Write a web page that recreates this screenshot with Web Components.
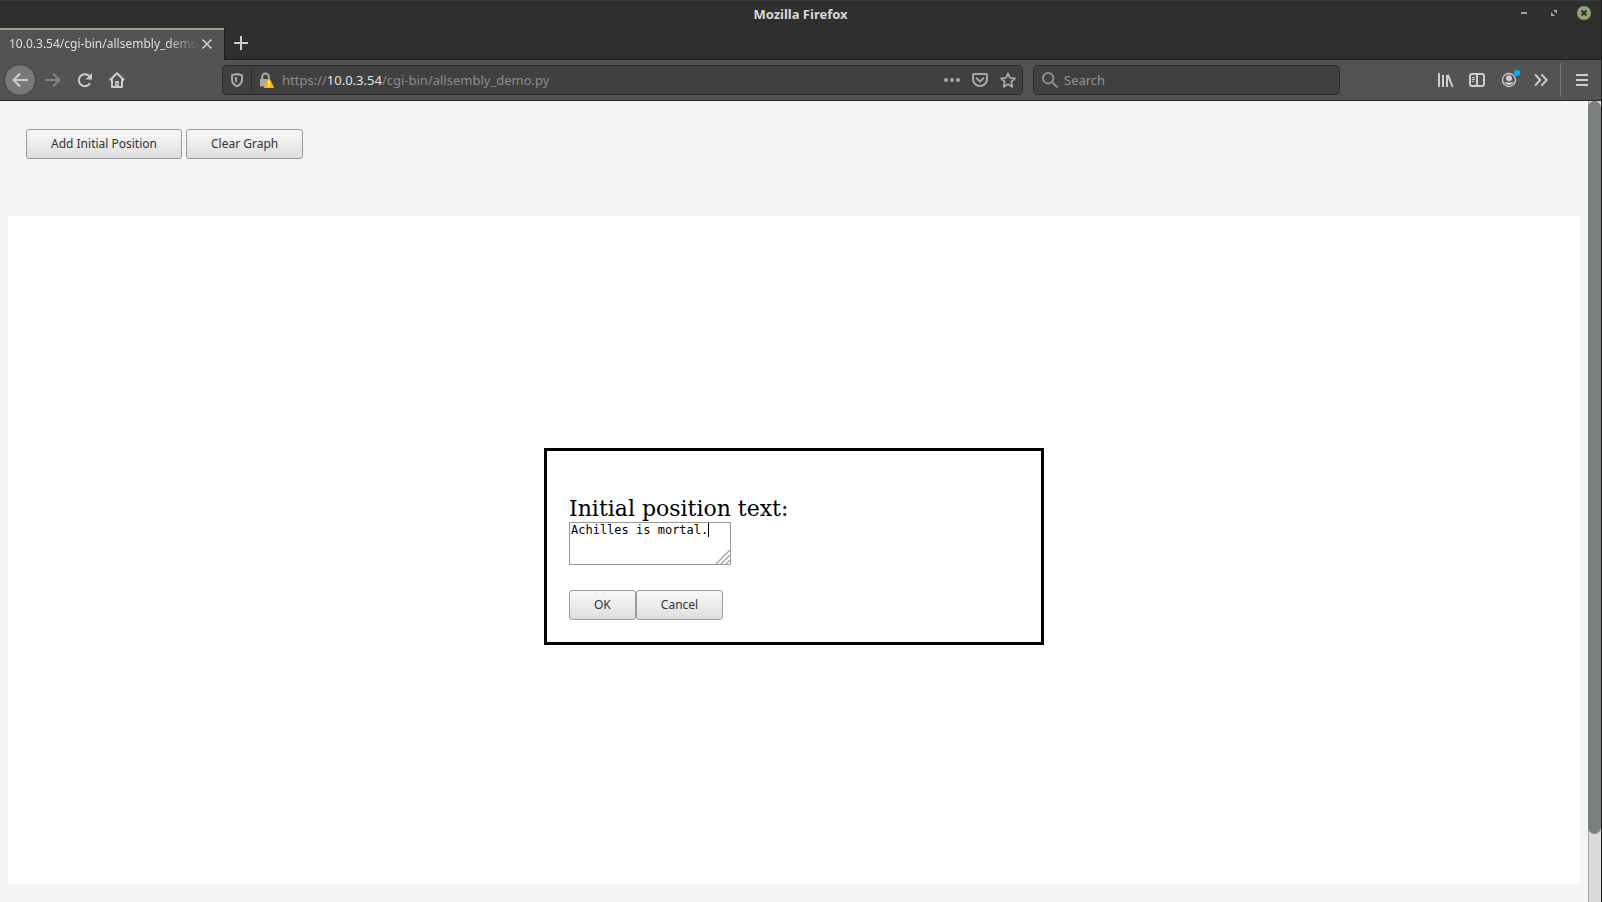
<!DOCTYPE html>
<html lang="en">
<head>
<meta charset="utf-8">
<title>Mozilla Firefox</title>
<style>
  html, body { height: 100%; }
  body { margin: 0; background: #f5f5f5; font-family: "Noto Sans", sans-serif; }
</style>
</head>
<body>
<browser-window>
  <title-bar slot="chrome">Mozilla Firefox</title-bar>
  <tab-strip slot="chrome">10.0.3.54/cgi-bin/allsembly_demo.py</tab-strip>
  <nav-bar slot="chrome"></nav-bar>
  <graph-page>
    <push-button slot="tools">Add Initial Position</push-button>
    <push-button slot="tools">Clear Graph</push-button>
    <position-dialog></position-dialog>
  </graph-page>
</browser-window>

<script>
  const define = (name, html) => {
    const template = document.createElement('template');
    template.innerHTML = html;
    customElements.define(name, class extends HTMLElement {
      constructor() {
        super();
        this.attachShadow({ mode: 'open' }).append(template.content.cloneNode(true));
      }
    });
  };

  define('browser-window', `
    <style>
      :host { display: flex; flex-direction: column; height: 100vh; box-sizing: border-box; border-right: 1px solid #1c1c1c; }
      main { flex: 1; display: flex; min-height: 0; }
      main ::slotted(*) { flex: 1; }
      .track { flex: 0 0 13px; box-sizing: border-box; background: #dadada; box-shadow: inset 1px 0 #a5a8a8; }
      .thumb { height: 733px; max-height: 92%; border-radius: 7px; background: #7b7f7f; }
    </style>
    <header><slot name="chrome"></slot></header>
    <main><slot></slot><div class="track"><div class="thumb"></div></div></main>`);

  define('title-bar', `
    <style>
      :host { display: grid; grid-template-columns: 1fr auto 1fr; align-items: start; height: 28px; box-sizing: border-box;
        border-top: 1px solid #3b3b3b; background: #2f2f2f; color: #d8d8d8; font-size: 13px; font-weight: 700; line-height: 26px; }
      .controls { grid-column: 3; display: flex; justify-content: flex-end; gap: 14px; padding-right: 9px; height: 24px; }
      .title { grid-column: 2; }
      button { border: 0; padding: 0; background: none; width: 16px; height: 24px; display: grid; place-items: center; }
      svg { display: block; }
    </style>
    <span class="title"><slot></slot></span>
    <div class="controls">
      <button aria-label="Minimize"><svg width="16" height="16"><path d="M5 8h6" stroke="#a3a3a3" stroke-width="2"/></svg></button>
      <button aria-label="Restore"><svg width="16" height="16" fill="#a3a3a3"><path d="M7 5h4v4zM5 7v4h4z"/></svg></button>
      <button aria-label="Close"><svg width="16" height="16"><circle cx="8" cy="8" r="7" fill="#8fa876"/><path d="M5.5 5.5l5 5m0-5l-5 5" stroke="#2f2f2f" stroke-width="2"/></svg></button>
    </div>`);

  define('tab-strip', `
    <style>
      :host { display: flex; gap: 1px; height: 32px; background: #2f2f2f; box-shadow: inset 0 -1px #1c1c1c; }
      .tab { display: flex; align-items: center; width: 224px; box-sizing: border-box; border-top: 2px solid #8fa876;
        background: #535353; padding: 0 9px; box-shadow: 1px 0 #1c1c1c; }
      .label { flex: 1; border: 0; padding: 0 0 2px; background: none; color: #dedede; text-align: left; font: 12px/18px "Noto Sans", sans-serif;
        white-space: nowrap; overflow: hidden; -webkit-mask-image: linear-gradient(to right, #000 83%, transparent); mask-image: linear-gradient(to right, #000 83%, transparent); }
      .icon { border: 0; padding: 0; background: none; width: 16px; height: 30px; display: grid; place-items: center; }
      .close { align-self: start; height: 28px; }
      .new { width: 32px; height: 30px; }
    </style>
    <div class="tab">
      <button class="label" role="tab" aria-selected="true"><slot></slot></button>
      <button class="icon close" aria-label="Close tab"><svg width="16" height="16"><path d="M3.5 3.5l9 9m0-9l-9 9" stroke="#cfcfcf" stroke-width="1.7"/></svg></button>
    </div>
    <button class="icon new" aria-label="New tab"><svg width="16" height="16"><path d="M8 1v14M1 8h14" stroke="#cfcfcf" stroke-width="2"/></svg></button>`);

  define('nav-bar', `
    <style>
      :host { display: flex; align-items: center; height: 41px; box-sizing: border-box; border-bottom: 1px solid #282828;
        background: #535353; padding: 0 3px 0 4px; }
      button { flex: none; width: 32px; height: 32px; border: 0; padding: 0; background: none; display: grid; place-items: center; }
      svg { display: block; fill: none; stroke: #cdcdcd; stroke-width: 2; overflow: visible; }
      .back { box-sizing: border-box; margin-right: 1px; border-radius: 50%; background: #787878; border: 1px solid #3c3c3c; }
      .forward svg { stroke: #858585; }
      .space { flex: 0 0 89px; }
      .field { display: flex; align-items: center; height: 30px; box-sizing: border-box; border: 1px solid #2a2a2a; border-radius: 4px; background: #404040; }
      .field button { width: 28px; height: 28px; }
      .field svg { stroke: #a8a8a8; }
      .url { flex: 1; min-width: 0; }
      .rule { width: 1px; height: 22px; background: #2a2a2a; }
      .address { flex: 1; min-width: 0; padding-left: 2px; font-size: 13px; line-height: 18px; color: #8c8c8c; white-space: nowrap; overflow: hidden; outline: 0; }
      .address span { color: #e4e4e4; }
      .search { flex: 0 0 307px; margin-left: 10px; padding-left: 8px; gap: 6px; }
      .field .glass { stroke: #8c8c8c; }
      input { flex: 1; min-width: 0; border: 0; padding: 0; background: none; outline: 0; font: 13px/18px "Noto Sans", sans-serif; color: #ececec; }
      input::placeholder { color: #959595; opacity: 1; }
      .split { width: 1px; height: 34px; background: #757575; margin: 0 5px 0 3px; }
    </style>
    <button class="back" aria-label="Back"><svg width="16" height="16"><path d="M16 8H1.5M8 1.5L1.5 8L8 14.5"/></svg></button>
    <button class="forward" aria-label="Forward"><svg width="16" height="16"><path d="M0 8h14.5M8 1.5L14.5 8L8 14.5"/></svg></button>
    <button aria-label="Reload"><svg width="16" height="16"><path d="M13 11.2A6 6 0 1 1 12.2 4"/><path d="M15 1v6.5H8.5z" fill="#cdcdcd" stroke="none"/></svg></button>
    <button aria-label="Home"><svg width="16" height="16"><path d="M.8 8.3L8 1.2l7.2 7.1M3 7v8h10V7" stroke-linejoin="round"/><path d="M6.2 15V9h3.6v6z" fill="#cdcdcd" stroke="none"/><path d="M8 11v1.5" stroke="#535353" stroke-width="1"/></svg></button>
    <span class="space"></span>
    <div class="field url">
      <button aria-label="Tracking protection"><svg width="16" height="16"><path d="M8 2l5 1.3v4.2c0 3.2-1.9 5.4-5 6.8c-3.1-1.4-5-3.6-5-6.8V3.3z" stroke-linejoin="round"/><path d="M8 4.8v6.3c-1.6-1-2.2-2.3-2.2-4V5.4z" fill="#a8a8a8" stroke="none"/></svg></button>
      <span class="rule"></span>
      <button aria-label="Connection is not secure"><svg width="16" height="16"><path d="M4.2 8V4.8a3.3 3.3 0 0 1 6.6 0V6"/><path d="M2 7h9.5v7.5H2z" fill="#a8a8a8" stroke="none"/><path d="M11 6.2l4.7 9.3H6.2z" fill="#ffb400" stroke="#ffb400" stroke-width="1" stroke-linejoin="round"/><path d="M11 8.7v3.4M11 13.2v1.4" stroke="#fff" stroke-width="1.4"/></svg></button>
      <div class="address" role="textbox" aria-label="Address" contenteditable="true" spellcheck="false">https://<span>10.0.3.54</span>/cgi-bin/allsembly_demo.py</div>
      <button aria-label="Page actions"><svg width="16" height="16"><g fill="#a8a8a8" stroke="none"><circle cx="2" cy="8" r="2"/><circle cx="8" cy="8" r="2"/><circle cx="14" cy="8" r="2"/></g></svg></button>
      <button aria-label="Save to Pocket"><svg width="16" height="16"><path d="M2 2h12q1 0 1 1v4.2a7 6.8 0 0 1-14 0V3q0-1 1-1z"/><path d="M4.6 6.2L8 9.4l3.4-3.2" stroke-linecap="round"/></svg></button>
      <button aria-label="Bookmark"><svg width="16" height="16"><path d="M8 1.3l2 4.6 5 .5-3.8 3.4 1.1 5L8 12.2l-4.3 2.6 1.1-5L1 6.4l5-.5z" stroke-width="1.8" stroke-linejoin="round"/></svg></button>
    </div>
    <label class="field search"><svg class="glass" width="16" height="16"><circle cx="6.2" cy="6.2" r="5.2"/><path d="M10 10l5.5 5.5"/></svg><input type="text" placeholder="Search" aria-label="Search"></label>
    <span class="space"></span>
    <button aria-label="Library"><svg width="16" height="16"><path d="M2 1v14M6 3v12M10 3v12"/><path d="M10.8 2.6L15.6 15"/></svg></button>
    <button aria-label="Sidebars"><svg width="16" height="16"><rect x="1" y="2" width="14" height="12" rx="2"/><path d="M8 2v12" /><path d="M3 5.5h3M3 7.5h3M3 9.5h2" stroke-width="1"/></svg></button>
    <button aria-label="Account"><svg width="16" height="16"><circle cx="8" cy="8" r="6.5" stroke-width="1.3"/><circle cx="8" cy="6.2" r="3" fill="#cdcdcd" stroke="none"/><path d="M3.5 9.5c1.5 1.4 7.5 1.4 9 0c0 4.5-9 4.5-9 0z" fill="#cdcdcd" stroke="none"/><circle cx="16" cy="1" r="3" fill="#00b0ff" stroke="none"/></svg></button>
    <button aria-label="More tools"><svg width="16" height="16"><path d="M2 2.3L7.2 8L2 13.7M8.5 2.3L13.7 8l-5.2 5.7"/></svg></button>
    <span class="split"></span>
    <button aria-label="Open menu"><svg width="16" height="16"><path d="M2 3h12M2 8h12M2 13h12"/></svg></button>`);

  define('push-button', `
    <style>
      :host { display: inline-block; }
      button { display: block; height: 30px; box-sizing: border-box; padding: 0 24px; border: 1px solid #9b9b9b; border-radius: 3px;
        background: linear-gradient(#f9f9f9, #dedede); color: #303436; font: 12px/18px "Noto Sans", sans-serif; white-space: nowrap; }
    </style>
    <button><slot></slot></button>`);

  define('graph-page', `
    <style>
      :host { display: flex; flex-direction: column; box-sizing: border-box; padding: 28px 8px 18px; background: #f5f5f5; }
      .tools { display: flex; gap: 4px; padding: 0 18px 57px; }
      .canvas { flex: 1; display: grid; place-items: center; padding-bottom: 7px; background: #fff; }
    </style>
    <div class="tools"><slot name="tools"></slot></div>
    <div class="canvas"><slot></slot></div>`);

  define('position-dialog', `
    <style>
      :host { display: block; width: 500px; max-width: 100%; box-sizing: border-box; border: 3px solid #000; padding: 44px 22px 22px; background: #fff; color: #000; }
      label { display: block; font: 22px/27px "DejaVu Serif", serif; }
      .entry { position: relative; width: 162px; margin-bottom: 25px; font: 12px/14px "DejaVu Sans Mono", monospace; }
      textarea { display: block; width: 100%; height: 43px; box-sizing: border-box; margin: 0; border: 1px solid #999; padding: 0 1px; resize: none; outline: 0; background: #fff; color: #000; font: inherit; overflow: hidden; }
      .caret { position: absolute; top: 1px; left: calc(2px + 19ch); width: 1px; height: 14px; background: #000; }
      svg { position: absolute; right: 1px; bottom: 1px; }
      .actions { display: flex; }
    </style>
    <label for="text">Initial position text:</label>
    <div class="entry">
      <textarea id="text" spellcheck="false">Achilles is mortal.</textarea>
      <span class="caret"></span>
      <svg width="14" height="14"><path d="M0 14L14 0M5 14l9-9M10 14l4-4" stroke="#aaa" stroke-width="1.5"/></svg>
    </div>
    <div class="actions"><push-button>OK</push-button><push-button>Cancel</push-button></div>`);
</script>
</body>
</html>
